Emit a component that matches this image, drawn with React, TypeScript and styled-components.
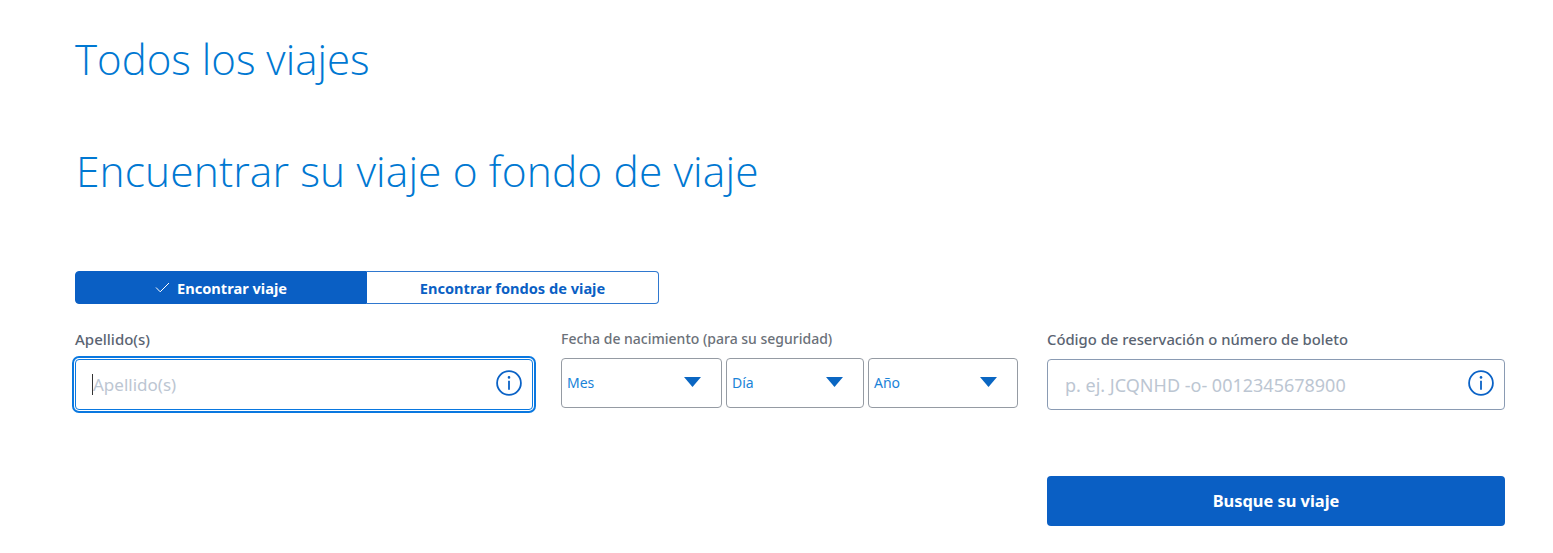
import React from "react";
import styled, { createGlobalStyle } from "styled-components";

const Global = createGlobalStyle`
  html, body { margin: 0; padding: 0; background: #fff; }
  body { font-family: "Noto Sans", "Open Sans", sans-serif; }
  input::placeholder { color: #bcc6d2; opacity: 1; }
`;

const Page = styled.main`
  width: 1430px;
  padding: 31px 0 0 75px;
`;

const Title = styled.h1`
  margin: 0;
  font-family: "Open Sans", sans-serif;
  font-weight: 300;
  font-size: 42px;
  line-height: 56px;
  color: #0078d2;
`;

const Heading = styled.h2`
  margin: 56px 0 0 1px;
  font-family: "Open Sans", sans-serif;
  font-weight: 300;
  font-size: 42.5px;
  line-height: 56px;
  color: #0078d2;
  letter-spacing: 0.1px;
`;

const Toggle = styled.div`
  display: grid;
  grid-template-columns: 292px 292px;
  width: 584px;
  height: 33px;
  margin-top: 72px;
`;

const ToggleOption = styled.button<{ $active?: boolean }>`
  display: flex;
  align-items: center;
  justify-content: center;
  gap: 7px;
  padding: 0;
  font-family: "Noto Sans", sans-serif;
  font-weight: 700;
  font-size: 14.6px;
  color: ${(p) => (p.$active ? "#fff" : "#0a5fc4")};
  background: ${(p) => (p.$active ? "#0a5fc4" : "#fff")};
  border: 1px solid ${(p) => (p.$active ? "#0a5fc4" : "#2f78cf")};
  border-left-width: ${(p) => (p.$active ? "1px" : "0")};
  border-radius: ${(p) => (p.$active ? "4px 0 0 4px" : "0 4px 4px 0")};
`;

const Form = styled.div`
  display: grid;
  grid-template-columns: repeat(3, 458px);
  column-gap: 28px;
  margin-top: 25px;
`;

const Field = styled.div`
  display: flex;
  flex-direction: column;
`;

const Label = styled.label<{ $size: number; $color: string }>`
  height: 20px;
  margin-bottom: 9px;
  font-size: ${(p) => p.$size}px;
  font-weight: 500;
  line-height: 20px;
  color: ${(p) => p.$color};
`;

const InputBox = styled.div<{ $focused?: boolean }>`
  display: flex;
  align-items: center;
  box-sizing: border-box;
  height: 51px;
  margin-top: 1px;
  padding: 0 10px 0 17px;
  background: #fff;
  border: 1px solid ${(p) => (p.$focused ? "#0a78e0" : "#8a9bb3")};
  border-radius: 4px;
  box-shadow: ${(p) => (p.$focused ? "0 0 0 1px #fff, 0 0 0 3px #0a78e0" : "none")};
`;

const Input = styled.input<{ $size: number }>`
  flex: 1;
  min-width: 0;
  padding: 0;
  border: 0;
  outline: 0;
  font-family: "Noto Sans", sans-serif;
  font-size: ${(p) => p.$size}px;
  color: #36495a;
  background: transparent;
`;

const Caret = styled.span`
  width: 1px;
  height: 21px;
  margin-left: -1px;
  background: #333;
`;

const Selects = styled.div`
  display: grid;
  grid-template-columns: 161px 138px 150px;
  column-gap: 4px;
`;

const Select = styled.div`
  display: flex;
  align-items: center;
  justify-content: space-between;
  box-sizing: border-box;
  height: 50px;
  padding: 0 20px 2px 5px;
  font-size: 14px;
  color: #1a83d8;
  background: #fff;
  border: 1px solid #959ba3;
  border-radius: 4px;
`;

const SubmitRow = styled.div`
  display: flex;
  justify-content: flex-end;
  margin-top: 66px;
`;

const Submit = styled.button`
  width: 458px;
  height: 50px;
  padding: 0 0 2px;
  font-family: "Noto Sans", sans-serif;
  font-weight: 700;
  font-size: 16.4px;
  color: #fff;
  background: #0a5fc4;
  border: 0;
  border-radius: 4px;
`;

const InfoSvg = styled.svg`
  flex: none;
  margin-bottom: 4px;
`;

const InfoIcon = () => (
  <InfoSvg width="26" height="26" viewBox="0 0 26 26" fill="none" aria-hidden>
    <circle cx="13" cy="13" r="11.9" stroke="#0a62c6" strokeWidth="1.8" />
    <circle cx="13" cy="7.4" r="1.3" fill="#0a62c6" />
    <path d="M13 10.8v9" stroke="#0a62c6" strokeWidth="1.8" />
  </InfoSvg>
);

const CheckIcon = () => (
  <svg width="15" height="11" viewBox="0 0 15 11" fill="none" aria-hidden>
    <path d="M1 5.5L5.2 9.8 14 1" stroke="#fff" strokeWidth="1" />
  </svg>
);

const Arrow = () => (
  <svg width="17" height="10" viewBox="0 0 17 10" aria-hidden>
    <path d="M0 0h17L8.5 10z" fill="#0a66c2" />
  </svg>
);

export default function App() {
  return (
    <>
      <Global />
      <Page>
        <Title>Todos los viajes</Title>
        <Heading>Encuentrar su viaje o fondo de viaje</Heading>
        <Toggle>
          <ToggleOption $active>
            <CheckIcon />
            Encontrar viaje
          </ToggleOption>
          <ToggleOption>Encontrar fondos de viaje</ToggleOption>
        </Toggle>
        <Form>
          <Field>
            <Label $size={15} $color="#5a6472">Apellido(s)</Label>
            <InputBox $focused>
              <Caret />
              <Input $size={17} placeholder="Apellido(s)" readOnly />
              <InfoIcon />
            </InputBox>
          </Field>
          <Field>
            <Label $size={14} $color="#6b7179">Fecha de nacimiento (para su seguridad)</Label>
            <Selects>
              <Select>Mes<Arrow /></Select>
              <Select>Día<Arrow /></Select>
              <Select>Año<Arrow /></Select>
            </Selects>
          </Field>
          <Field>
            <Label $size={14.8} $color="#5a6472">Código de reservación o número de boleto</Label>
            <InputBox>
              <Input $size={18} placeholder="p. ej. JCQNHD -o- 0012345678900" readOnly />
              <InfoIcon />
            </InputBox>
          </Field>
        </Form>
        <SubmitRow>
          <Submit>Busque su viaje</Submit>
        </SubmitRow>
      </Page>
    </>
  );
}
